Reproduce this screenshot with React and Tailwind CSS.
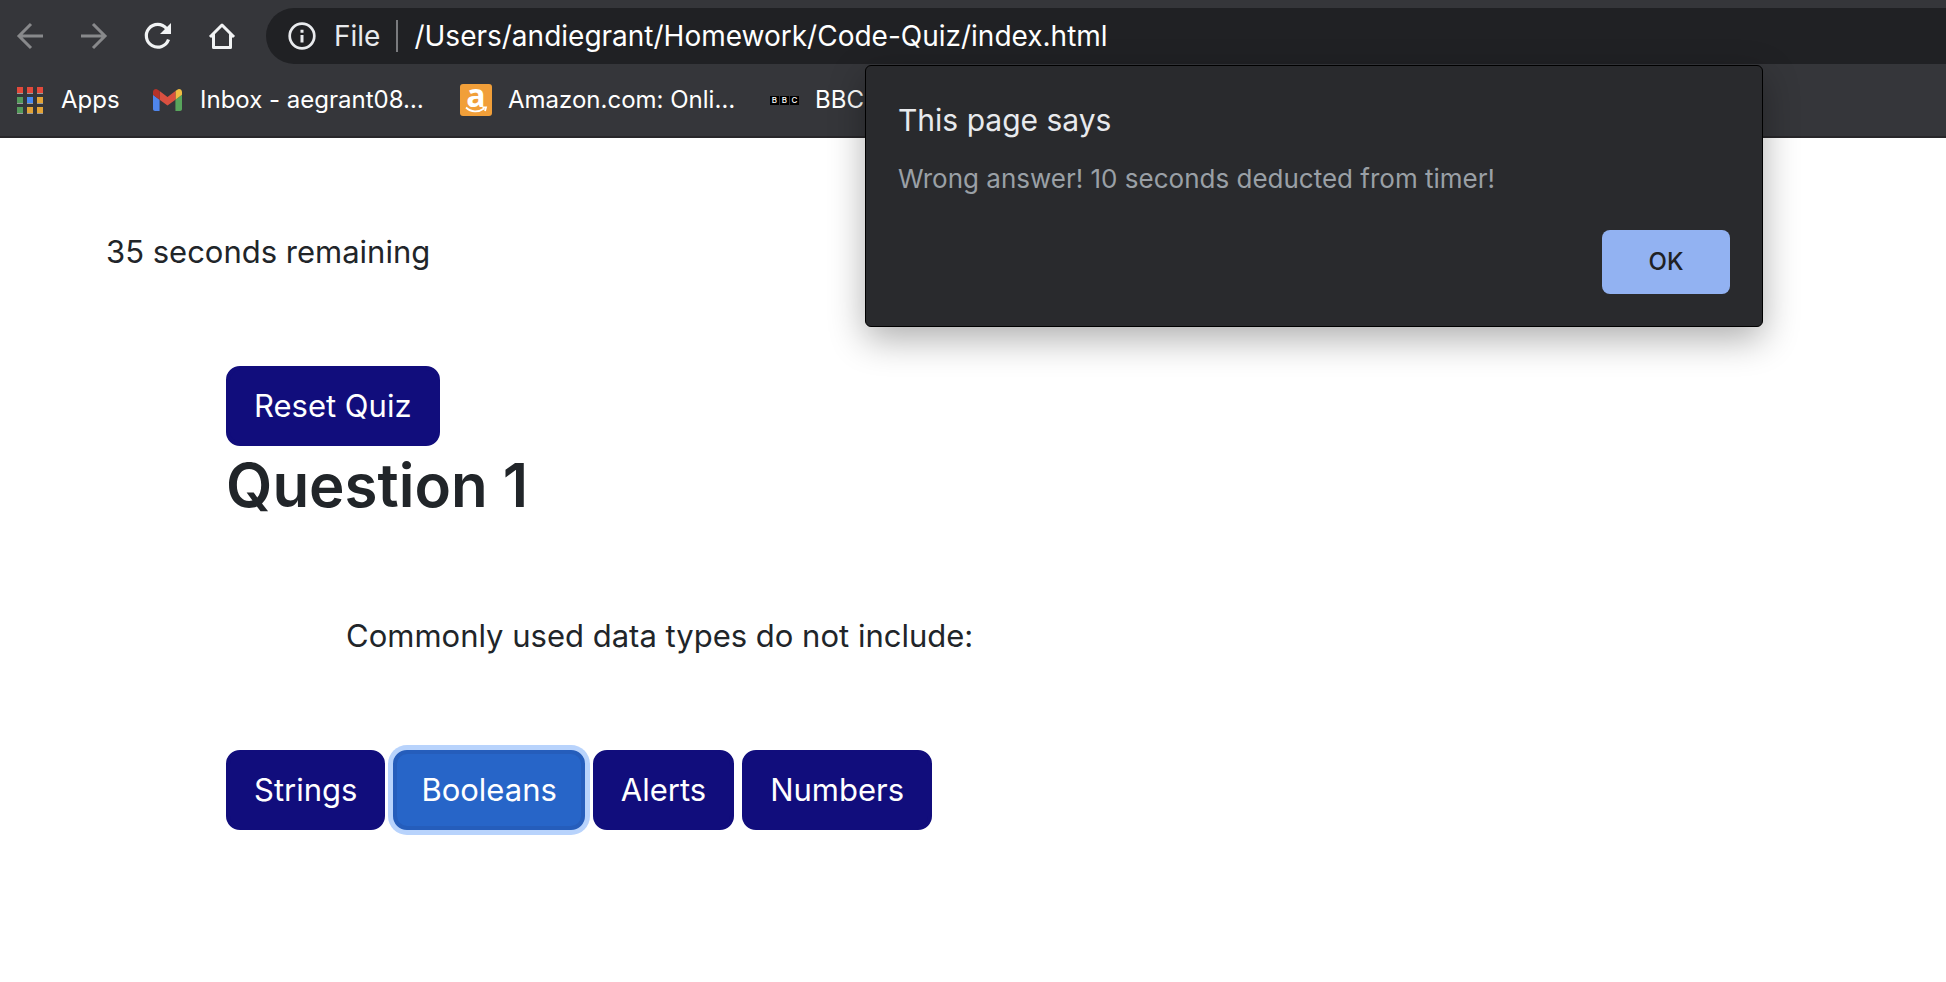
function BackIcon() {
  return (
    <svg viewBox="0 0 32 32" className="size-8" fill="none" stroke="currentColor" strokeWidth="3">
      <path d="M29 16H5M17 4 5 16l12 12" />
    </svg>
  );
}

function ForwardIcon() {
  return (
    <svg viewBox="0 0 32 32" className="size-8" fill="none" stroke="currentColor" strokeWidth="3">
      <path d="M3 16h24M15 4l12 12-12 12" />
    </svg>
  );
}

function ReloadIcon() {
  return (
    <svg viewBox="0 0 32 32" className="size-8" fill="none">
      <path d="M26.500 19.500A11.400 11.400 0 1 1 24.500 8.500" stroke="currentColor" strokeWidth="3.2" />
      <path d="M29 3v11H18z" fill="currentColor" />
    </svg>
  );
}

function HomeIcon() {
  return (
    <svg viewBox="0 0 32 32" className="size-8" fill="none" stroke="currentColor" strokeWidth="3">
      <path d="M4 17 16 5l12 12M7.5 14v13.5h17V14" strokeLinejoin="round" />
    </svg>
  );
}

function InfoIcon() {
  return (
    <svg viewBox="0 0 28 28" className="size-7" fill="none">
      <circle cx="14" cy="14" r="12.3" stroke="currentColor" strokeWidth="2.7" />
      <path d="M12.500 13h3v7.500h-3zM12.500 7.800h3v3h-3z" fill="currentColor" />
    </svg>
  );
}

function AppsIcon() {
  const colors = ["#e24a3b", "#e24a3b", "#e24a3b", "#549a5b", "#4688f1", "#e3a336", "#549a5b", "#e3a336", "#e3a336"];
  return (
    <svg viewBox="0 0 26 27" className="h-[27px] w-[26px]">
      {colors.map((c, i) => (
        <g key={i}>
          <rect x={(i % 3) * 10} y={Math.floor(i / 3) * 10} width="6" height="7" fill="#9a9a9a" />
          <rect x={(i % 3) * 10} y={Math.floor(i / 3) * 10} width="6" height="6" fill={c} />
        </g>
      ))}
    </svg>
  );
}

function GmailIcon() {
  return (
    <svg viewBox="52 42 88 66" className="h-[22px] w-[29px]">
      <path fill="#4f86ec" d="M58 108h14V74L52 59v43c0 3.32 2.69 6 6 6" />
      <path fill="#58a55c" d="M120 108h14c3.32 0 6-2.69 6-6V59l-20 15" />
      <path fill="#f1bd42" d="M120 48v26l20-15v-8c0-7.42-8.47-11.65-14.4-7.2" />
      <path fill="#d95040" d="M72 74V48l24 18 24-18v26L96 92" />
      <path fill="#b6332a" d="M52 51v8l20 15V48l-5.6-4.2c-5.94-4.45-14.4-.22-14.4 7.2" />
    </svg>
  );
}

function AmazonIcon() {
  return (
    <span className="flex size-8 flex-col items-center rounded-[3px] bg-[#f19f39] font-['Open_Sans',sans-serif] text-[32px] leading-[22px] font-bold">
      <span aria-hidden="true">a</span>
      <svg viewBox="0 0 24 8" className="h-2 w-6" fill="none" stroke="white" strokeWidth="1.8">
        <path d="M2 1.500c5 5 12.500 5 18 1M18.500 1.500h3.500l-1 3.500" />
      </svg>
    </span>
  );
}

function BbcIcon() {
  return (
    <span aria-hidden="true" className="flex gap-px text-[8px] leading-[9px] font-medium">
      {["B", "B", "C"].map((letter, i) => (
        <span key={i} className="w-[9px] bg-black text-center">{letter}</span>
      ))}
    </span>
  );
}

function QuizButton({ active, children }) {
  const look = active
    ? "border-[#255dbb] bg-[#2765c8] ring-[5px] ring-[#b8d3fc]"
    : "border-[#110d7c] bg-[#110d7c]";
  return (
    <button type="button" className={`h-20 rounded-[14px] border-4 px-6 text-white ${look}`}>
      {children}
    </button>
  );
}

export default function App() {
  return (
    <div className="relative min-h-screen overflow-x-hidden bg-white font-[Inter,sans-serif]">
      <header className="border-b-2 border-[#28272a] bg-[#35363a] pt-2 text-white">
        <nav aria-label="Browser" className="flex h-14 items-center pl-3.5">
          <div className="flex w-[252px] shrink-0 gap-8">
            <button type="button" aria-label="Back" className="text-[#88898b]"><BackIcon /></button>
            <button type="button" aria-label="Forward" className="text-[#88898b]"><ForwardIcon /></button>
            <button type="button" aria-label="Reload" className="text-[#f1f3f4]"><ReloadIcon /></button>
            <button type="button" aria-label="Home" className="text-[#f1f3f4]"><HomeIcon /></button>
          </div>
          <div className="flex h-14 grow items-center rounded-l-full bg-[#202124] pl-[22px] text-[28px] text-[#e8eaed]">
            <InfoIcon />
            <span className="ml-[18px]">File</span>
            <span className="mx-4 h-8 w-0.5 bg-[#7a7b7e]" />
            <span className="text-white">/Users/andiegrant/Homework/Code-Quiz/index.html</span>
          </div>
        </nav>
        <nav aria-label="Bookmarks" className="flex h-[72px] items-center overflow-hidden pl-[17px] text-2xl">
          <a href="#" className="flex w-[136px] shrink-0 items-center gap-[18px]"><AppsIcon />Apps</a>
          <a href="#" className="flex w-[307px] shrink-0 items-center gap-[18px]"><GmailIcon />Inbox - aegrant08…</a>
          <a href="#" className="flex w-[310px] shrink-0 items-center gap-4"><AmazonIcon />Amazon.com: Onli…</a>
          <a href="#" className="flex shrink-0 items-center gap-4"><BbcIcon />BBC</a>
        </nav>
      </header>

      <main className="px-[106px] py-[90px] text-[31px] leading-[48px] text-[#212529]">
        <p>35 seconds remaining</p>
        <section className="mt-[90px] px-[120px]">
          <QuizButton>Reset Quiz</QuizButton>
          <h2 className="pt-0.5 text-[60px] leading-[74px] font-semibold">Question 1</h2>
          <p className="my-[90px] px-[120px]">Commonly used data types do not include:</p>
          <div className="flex gap-2">
            <QuizButton>Strings</QuizButton>
            <QuizButton active>Booleans</QuizButton>
            <QuizButton>Alerts</QuizButton>
            <QuizButton>Numbers</QuizButton>
          </div>
        </section>
      </main>

      <div
        role="alertdialog"
        aria-labelledby="dialog-title"
        aria-describedby="dialog-message"
        className="absolute top-[65px] left-[865px] w-[898px] rounded-md border border-black bg-[#292a2d] px-8 py-8 shadow-[0_12px_36px_rgba(0,0,0,0.32)]"
      >
        <h1 id="dialog-title" className="text-[30px] leading-[44px] text-[#e8eaed]">This page says</h1>
        <p id="dialog-message" className="mt-[17px] text-[26px] leading-10 text-[#9aa0a6]">
          Wrong answer! 10 seconds deducted from timer!
        </p>
        <div className="mt-[31px] flex justify-end">
          <button type="button" className="h-16 w-32 rounded-lg bg-[#92b2f2] text-2xl font-medium text-[#202124]">OK</button>
        </div>
      </div>
    </div>
  );
}
